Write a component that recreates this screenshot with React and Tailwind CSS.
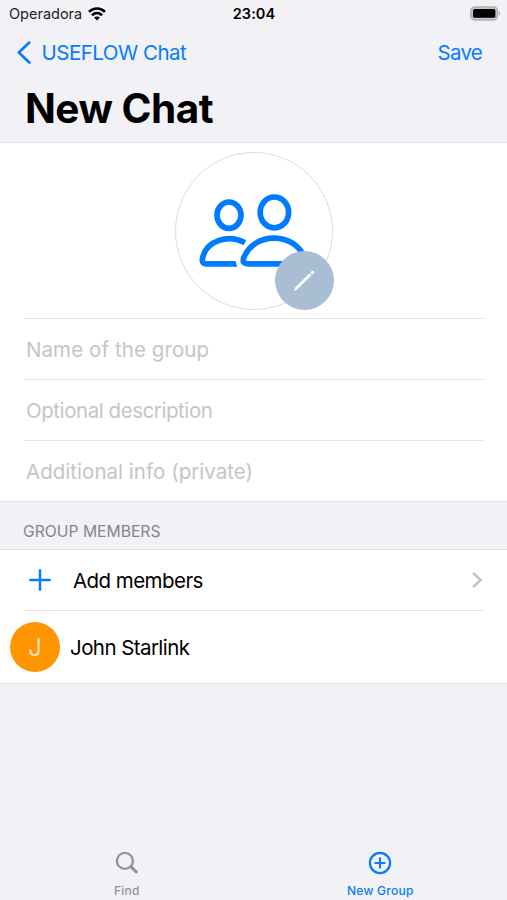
import React from 'react';

const FIELDS = [
  { name: 'name', placeholder: 'Name of the group', className: 'tracking-[0.08px]' },
  { name: 'description', placeholder: 'Optional description', className: 'tracking-[-0.44px]' },
  { name: 'info', placeholder: 'Additional info (private)', className: 'tracking-[0.03px]' },
];

export default function App() {
  return (
    <div className="flex h-[900px] w-[507px] flex-col overflow-hidden bg-[#f1f1f6] font-['Inter','Liberation_Sans',sans-serif] text-black">
      <StatusBar />
      <NavBar />
      <GroupForm />
      <h2 className="flex h-[47px] items-end px-[23px] pb-[5px] text-[15.7px] leading-[24px] tracking-[0px] text-[#85858a]">
        GROUP MEMBERS
      </h2>
      <MemberList />
      <TabBar />
    </div>
  );
}

function StatusBar() {
  return (
    <div className="grid h-[27px] grid-cols-3 items-center pl-[9px] pr-[6px] text-[14.5px] leading-[18px]">
      <div className="flex items-center gap-[6px]">
        <span className="tracking-[0px] text-[#222]">Operadora</span>
        <svg className="h-[14px] w-[18px]" viewBox="0 0 18 14" fill="none" stroke="#000" strokeWidth="2.6">
          <path d="M1 4.9C5.6 0.4 12.4 0.4 17 4.9" />
          <path d="M4 8.2C6.9 5.4 11.1 5.4 14 8.2" />
          <path d="M9 13.4L6.1 10.6C7.7 9 10.3 9 11.9 10.6Z" fill="#000" stroke="none" />
        </svg>
      </div>
      <span className="pr-[2px] text-center font-semibold tracking-[0.1px]">23:04</span>
      <svg className="h-[16px] w-[32px] justify-self-end" viewBox="0 0 32 16">
        <rect x="1.9" y="0.9" width="26.6" height="13" rx="4" fill="#c9c9cc" stroke="#b0b0b3" strokeWidth="1.5" />
        <rect x="4" y="3" width="22.4" height="8.8" rx="1.5" fill="#000" />
        <path d="M29.8 5.2C31.6 5.9 31.6 8.9 29.8 9.6Z" fill="#adadb0" />
      </svg>
    </div>
  );
}

function NavBar() {
  return (
    <header className="flex h-[116px] flex-col border-b border-[#e2e2e4]">
      <div className="flex h-[51px] items-center justify-between pl-[16px] pr-[25px] text-[20.5px] leading-[26px] text-[#087cfa]">
        <button className="flex items-center gap-[9.5px]">
          <svg className="h-[24px] w-[16px]" viewBox="0 0 16 24" fill="none" stroke="currentColor" strokeWidth="2.7" strokeLinecap="round" strokeLinejoin="round">
            <path d="M13.3 1.6L2.8 11.6L13.3 21.6" />
          </svg>
          <span className="tracking-[-0.5px]">USEFLOW Chat</span>
        </button>
        <button className="tracking-[-0.75px]">Save</button>
      </div>
      <h1 className="px-[25px] pt-[7px] text-[40.5px] font-bold leading-[48px] tracking-[-0.5px]">New Chat</h1>
    </header>
  );
}

function GroupForm() {
  return (
    <section className="h-[359px] border-b border-[#e2e2e5] bg-white">
      <div className="flex h-[175px] justify-center pt-[9px]">
        <div className="relative size-[158px] rounded-full border border-[#dcdcdd]">
          <svg className="absolute left-[22px] top-[40px] h-[76px] w-[110px]" viewBox="0 0 110 76" fill="none" stroke="#007aff" strokeWidth="5.7">
            <ellipse cx="31" cy="22.2" rx="12" ry="13.2" />
            <ellipse cx="76.4" cy="19.4" rx="14.2" ry="15.4" />
            <path d="M47 49.8C31 41 8.2 46.8 4.5 65.5C3.9 69 4.9 70.8 8 70.8H36.5" />
            {/* slanted end, following the front figure's shoulder */}
            <path d="M36 67.95H37.4L39.4 73.65H36Z" fill="#007aff" stroke="none" />
            <path d="M50 70.8H102.5C106 70.8 107.2 68.4 106.4 65.6C98.4 38.8 55 37.8 45.5 65.6C44.5 68.8 46 70.8 50 70.8Z" />
          </svg>
          <button className="absolute left-[99px] top-[98px] flex size-[59px] items-center justify-center rounded-full bg-[#a9bdd3]">
            <svg className="size-[24px]" viewBox="0 0 24 24" fill="#fff">
              <path d="M17.4 4.2L19.5 6.3L5 20.4L1.7 21.9L3.2 18.6Z" />
              <path d="M18.3 3.4L19.5 2.2C21.1 0.9 23.3 3 21.7 4.5L20.5 5.6Z" />
            </svg>
          </button>
        </div>
      </div>
      {FIELDS.map((field) => (
        <div key={field.name} className="ml-[24px] mr-[22px] flex h-[61px] items-center border-t border-[#e7e7e8] pl-[2px] pt-[2px]">
          <span className={`text-[20.5px] leading-[26px] text-[#c5c5c7] ${field.className}`}>{field.placeholder}</span>
        </div>
      ))}
    </section>
  );
}

function MemberList() {
  return (
    <section className="border-y border-[#e2e2e5] bg-white text-[20.5px] leading-[26px]">
      <div className="ml-[24px] mr-[23px] flex h-[61px] items-center border-b border-[#e2e2e5]">
        <svg className="ml-[4px] size-[24px] text-[#087cfa]" viewBox="0 0 24 24" fill="none" stroke="currentColor" strokeWidth="2.5" strokeLinecap="round">
          <path d="M12 2.2V21.8M2.2 12H21.8" />
        </svg>
        <span className="ml-[21px] pt-[2px] tracking-[-0.55px]">Add members</span>
        <svg className="ml-auto h-[18px] w-[13px]" viewBox="0 0 13 18" fill="none" stroke="#c4c4c6" strokeWidth="2.6">
          <path d="M2.2 2L9.6 9L2.2 16" />
        </svg>
      </div>
      <div className="flex h-[72px] items-center pl-[10px]">
        <div className="flex size-[50px] items-center justify-center rounded-full bg-[#ff9500] pt-[2px] text-[24px] text-[#f3dcbd]">J</div>
        <span className="ml-[10px] pt-[2px] tracking-[-0.57px]">John Starlink</span>
      </div>
    </section>
  );
}

function TabBar() {
  return (
    <nav className="mt-auto grid h-[50px] grid-cols-2 text-[12px] font-medium leading-[14px]">
      <button className="flex flex-col items-center text-[#949498]">
        <svg className="h-[34px] w-[24px]" viewBox="0 0 24 34" fill="none" stroke="currentColor">
          <circle cx="9.9" cy="10.9" r="8" strokeWidth="2.3" />
          <path d="M15.8 16.6L21.3 22" strokeWidth="3.1" strokeLinecap="round" />
        </svg>
        <span className="tracking-[0.2px]">Find</span>
      </button>
      <button className="flex flex-col items-center text-[#087cfa]">
        <svg className="h-[34px] w-[24px]" viewBox="0 0 24 34" fill="none" stroke="currentColor" strokeWidth="2.2">
          <circle cx="12" cy="13" r="10.1" />
          <path d="M12 8.4V17.6M7.4 13H16.6" strokeLinecap="round" />
        </svg>
        <span className="tracking-[0.25px]">New Group</span>
      </button>
    </nav>
  );
}
